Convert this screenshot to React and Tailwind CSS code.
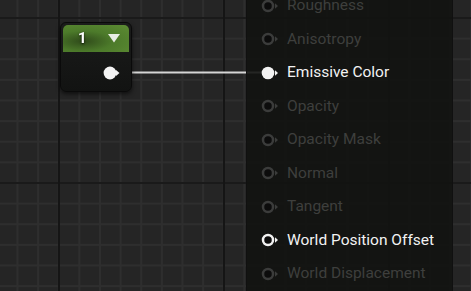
import React from "react";

const rows = [
  { label: "Roughness", state: "off" },
  { label: "Anisotropy", state: "off" },
  { label: "Emissive Color", state: "filled" },
  { label: "Opacity", state: "off" },
  { label: "Opacity Mask", state: "off" },
  { label: "Normal", state: "off" },
  { label: "Tangent", state: "off" },
  { label: "World Position Offset", state: "ring" },
  { label: "World Displacement", state: "off" },
];

function Pin({ state }) {
  const c = state === "off" ? "#3b3c3b" : "#f2f2f2";
  return (
    <svg width="20" height="14" viewBox="0 0 20 14" className="shrink-0">
      {state === "filled" ? (
        <circle cx="7" cy="7" r="6.3" fill={c} />
      ) : (
        <circle cx="7" cy="7" r="5" fill="#0c0c0c" stroke={c} strokeWidth="2.5" />
      )}
      <path d="M14 4.2 L17 7 L14 9.8 Z" fill={c} />
    </svg>
  );
}

export default function App() {
  return (
    <div
      className="relative w-[471px] h-[291px] overflow-hidden bg-[#252525] font-['Roboto',sans-serif]
      bg-[linear-gradient(to_right,#151515_2px,transparent_2px),linear-gradient(to_bottom,#1a1a1a_2px,transparent_2px),linear-gradient(to_right,#2e2e2e_2px,transparent_2px),linear-gradient(to_bottom,#2e2e2e_2px,transparent_2px)]
      bg-[size:165px_165px,165px_165px,20.625px_20.625px,20.625px_20.625px]
      bg-[position:58px_0,0_17px,16.5px_0,0_17px]"
    >
      {/* wire */}
      <svg className="absolute left-0 top-0" width="471" height="291">
        <line x1="118" y1="72.5" x2="262" y2="72.5" stroke="#d6d6d6" strokeWidth="2" />
      </svg>

      {/* Constant node */}
      <div className="absolute left-[60px] top-[22px] w-[72px] h-[70px] rounded-[6px] border border-[#0a0a0a] bg-[linear-gradient(to_bottom,#1b1c1b,#121312)] shadow-[0_2px_4px_rgba(0,0,0,0.6)] flex flex-col overflow-hidden">
        <div className="h-[27px] mx-[2px] mt-[2px] rounded-t-[5px] bg-[radial-gradient(ellipse_at_30%_60%,#2f4a1a_0%,#4c7a2a_45%,#5d8c33_100%)] flex items-center justify-between pl-[15px] pr-[9px]">
          <span className="text-white text-[15px] font-bold leading-none drop-shadow-[0_1px_1px_rgba(0,0,0,0.8)]">1</span>
          <svg width="12" height="9" viewBox="0 0 12 9">
            <path d="M0 0 L12 0 L6 8.5 Z" fill="#e8ece4" />
          </svg>
        </div>
        <div className="flex-1 flex items-center justify-end pr-[8px] pt-[3px]">
          <svg width="20" height="14" viewBox="0 0 20 14">
            <circle cx="7" cy="7" r="6.4" fill="#f4f4f4" />
            <path d="M13 4 L16.5 7 L13 10 Z" fill="#f4f4f4" />
          </svg>
        </div>
      </div>

      {/* Material result panel */}
      <div className="absolute left-[246px] top-[-11px] w-[207px] h-[320px] bg-[rgba(18,19,17,0.9)] border-x border-[#101010] flex flex-col pl-[14px]">
        {rows.map((r) => (
          <div key={r.label} className="h-[33.5px] flex items-center gap-[6px] shrink-0">
            <Pin state={r.state} />
            <span
              className={
                "text-[15.5px] leading-none whitespace-nowrap " +
                (r.state === "off" ? "text-[#3e3f3d]" : "text-[#f2f2f2]")
              }
            >
              {r.label}
            </span>
          </div>
        ))}
      </div>
    </div>
  );
}
